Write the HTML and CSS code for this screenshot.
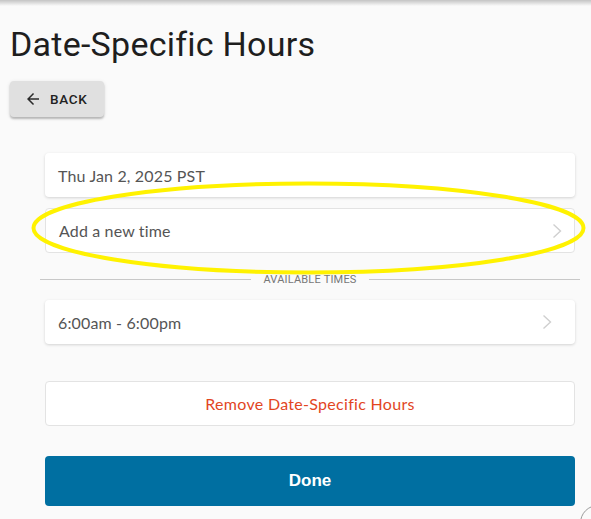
FILE: index.html
```html
<!DOCTYPE html>
<html>
<head>
<meta charset="utf-8">
<link rel="stylesheet" href="styles.css">
</head>
<body>
<div class="topshadow"></div>
<main class="page">
  <h1 class="title">Date-Specific Hours</h1>
  <button class="back">
    <svg class="back-icon" viewBox="0 0 24 24" width="18" height="18"><path d="M20 11H7.83l5.59-5.59L12 4l-8 8 8 8 1.41-1.41L7.83 13H20v-2z" fill="#2b2b2b"/></svg>
    <span>BACK</span>
  </button>
  <section class="content">
    <div class="card shadow">Thu Jan 2, 2025 PST</div>
    <div class="card bordered row add">
      <span>Add a new time</span>
      <svg class="chev" viewBox="0 0 10 16" width="10" height="16"><path d="M1.5 1.5 L8.5 8 L1.5 14.5" fill="none" stroke="#cfcfcf" stroke-width="1.4"/></svg>
    </div>
    <div class="divider"><span class="line"></span><span class="divider-text">AVAILABLE TIMES</span><span class="line"></span></div>
    <div class="card shadow row time">
      <span>6:00am - 6:00pm</span>
      <svg class="chev" viewBox="0 0 10 16" width="10" height="16"><path d="M1.5 1.5 L8.5 8 L1.5 14.5" fill="none" stroke="#cfcfcf" stroke-width="1.4"/></svg>
    </div>
    <div class="card bordered remove">Remove Date-Specific Hours</div>
    <button class="done">Done</button>
  </section>
</main>
<svg class="annotation" width="591" height="519" viewBox="0 0 591 519">
  <ellipse cx="308.5" cy="228" rx="275" ry="44.5" fill="none" stroke="#fff200" stroke-width="4"/>
</svg>
<div class="fab-edge"></div>
</body>
</html>
```
FILE: styles.css
```css
html, body {
  margin: 0;
  padding: 0;
  background: #fafafa;
  overflow: hidden;
}
body {
  width: 591px;
  height: 519px;
  position: relative;
  font-family: Roboto, "Liberation Sans", sans-serif;
}
.topshadow {
  height: 6px;
  background: linear-gradient(to bottom, rgba(0,0,0,0.22), rgba(0,0,0,0));
}
.page {
  padding: 0 0 0 10px;
}
.title {
  margin: 18px 0 0 0;
  font-family: Roboto, sans-serif;
  font-weight: 400;
  font-size: 34px;
  line-height: 40px;
  color: #1e1e1e;
  letter-spacing: 0.25px;
}
.back {
  margin-top: 17px;
  width: 94px;
  height: 36px;
  border: none;
  border-radius: 4px;
  background: #e0e0e0;
  box-shadow: 0 2px 2px rgba(0,0,0,0.22), 0 1px 4px rgba(0,0,0,0.10);
  display: flex;
  align-items: center;
  padding: 0 0 0 14px;
  gap: 8px;
  font-family: Roboto, sans-serif;
  font-weight: 500;
  font-size: 13.5px;
  letter-spacing: 0.7px;
  color: #222;
}
.back-icon { display: block; }
.content {
  margin: 36px 0 0 35px;
  width: 530px;
  display: flex;
  flex-direction: column;
}
.card {
  box-sizing: border-box;
  background: #fff;
  border-radius: 4px;
  font-family: Lato, "Open Sans", sans-serif;
  font-size: 16px;
  letter-spacing: 0.15px;
  color: #555;
  padding: 0 13px;
  display: flex;
  align-items: center;
}
.shadow {
  height: 44px;
  box-shadow: 0 1px 3px rgba(0,0,0,0.16);
}
.bordered {
  height: 45px;
  border: 1px solid #e3e3e3;
}
.row {
  justify-content: space-between;
}
.add {
  margin-top: 11px;
  padding-right: 12px;
}
.chev { display: block; }
.divider {
  margin: 18px -5px 0 -5px;
  height: 16px;
  display: flex;
  align-items: center;
  gap: 12px;
}
.divider .line {
  flex: 1;
  height: 1px;
  background: #c8c8c8;
}
.divider-text {
  font-family: Roboto, sans-serif;
  font-size: 11px;
  color: #777;
  letter-spacing: 0.2px;
}
.time {
  margin-top: 13px;
  padding-right: 23px;
}
.remove {
  margin-top: 37px;
  justify-content: center;
  color: #e2461f;
  font-size: 16px;
  letter-spacing: 0.3px;
}
.done {
  margin-top: 30px;
  height: 50px;
  border: none;
  border-radius: 4px;
  background: #006fa1;
  color: #fff;
  font-family: "Liberation Sans", Arial, sans-serif;
  font-weight: 700;
  font-size: 17px;
}
.annotation {
  position: absolute;
  left: 0;
  top: 0;
  pointer-events: none;
}
.fab-edge {
  position: absolute;
  left: 580px;
  top: 505px;
  width: 36px;
  height: 36px;
  border-radius: 50%;
  border: 1.5px solid #9a9a9a;
  box-sizing: border-box;
}
```
